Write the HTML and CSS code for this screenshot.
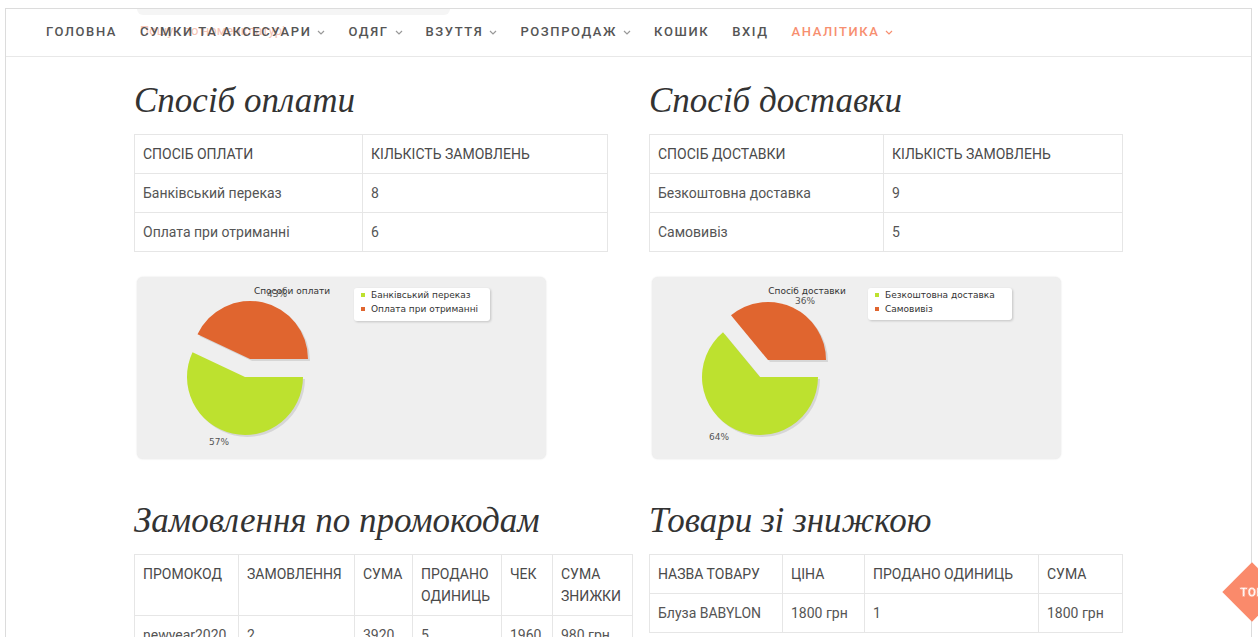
FILE: index.html
```html
<!DOCTYPE html>
<html lang="uk">
<head>
<meta charset="utf-8">
<title>Аналітика</title>
<link rel="stylesheet" href="styles.css">
</head>
<body>
<div class="page">
  <header class="nav">
    <div class="search-ghost"><span>Пошук по номенклатурі</span></div>
    <ul class="menu">
      <li>Головна</li>
      <li>Сумки та аксесуари <svg class="chev" viewBox="0 0 8 5" width="8" height="5"><polyline points="1,1 4,4 7,1"/></svg></li>
      <li>Одяг <svg class="chev" viewBox="0 0 8 5" width="8" height="5"><polyline points="1,1 4,4 7,1"/></svg></li>
      <li>Взуття <svg class="chev" viewBox="0 0 8 5" width="8" height="5"><polyline points="1,1 4,4 7,1"/></svg></li>
      <li>Розпродаж <svg class="chev" viewBox="0 0 8 5" width="8" height="5"><polyline points="1,1 4,4 7,1"/></svg></li>
      <li>Кошик</li>
      <li>Вхід</li>
      <li class="active">Аналітика <svg class="chev" viewBox="0 0 8 5" width="8" height="5"><polyline points="1,1 4,4 7,1"/></svg></li>
    </ul>
  </header>

  <main class="content">
    <section class="grid">
      <div class="col">
        <h2>Спосіб оплати</h2>
        <table class="tbl">
          <colgroup><col class="w228"><col></colgroup>
          <tr><th>Спосіб оплати</th><th>Кількість замовлень</th></tr>
          <tr><td>Банківський переказ</td><td>8</td></tr>
          <tr><td>Оплата при отриманні</td><td>6</td></tr>
        </table>
        <div class="chart">
          <svg width="409" height="182" viewBox="0 0 409 182">
            <g class="shade">
              <path d="M113,82 L171,82 A58,58 0 0 0 60.5,57.3 Z" transform="translate(2,2)"/>
              <path d="M108,100 L55.5,75.3 A58,58 0 1 0 166,100 Z" transform="translate(2,2)"/>
            </g>
            <path class="slice-orange" d="M113,82 L171,82 A58,58 0 0 0 60.5,57.3 Z"/>
            <path class="slice-green" d="M108,100 L55.5,75.3 A58,58 0 1 0 166,100 Z"/>
            <text class="pct" x="140" y="20" text-anchor="middle">43%</text>
            <text class="ttl" x="155" y="17" text-anchor="middle">Способи оплати</text>
            <text class="pct" x="82" y="168" text-anchor="middle">57%</text>
            <rect class="legend" x="217" y="11" width="136" height="33" rx="3"/>
            <rect class="sq-green" x="224" y="16" width="4" height="4"/>
            <text class="lg" x="234" y="21">Банківський переказ</text>
            <rect class="sq-orange" x="224" y="30" width="4" height="4"/>
            <text class="lg" x="234" y="35">Оплата при отриманні</text>
          </svg>
        </div>
      </div>
      <div class="col">
        <h2>Спосіб доставки</h2>
        <table class="tbl">
          <colgroup><col class="w234"><col></colgroup>
          <tr><th>Спосіб доставки</th><th>Кількість замовлень</th></tr>
          <tr><td>Безкоштовна доставка</td><td>9</td></tr>
          <tr><td>Самовивіз</td><td>5</td></tr>
        </table>
        <div class="chart">
          <svg width="409" height="182" viewBox="0 0 409 182">
            <g class="shade">
              <path d="M116,83 L174,83 A58,58 0 0 0 79,38.3 Z" transform="translate(2,2)"/>
              <path d="M108,100 L71,55.3 A58,58 0 1 0 166,100 Z" transform="translate(2,2)"/>
            </g>
            <path class="slice-orange" d="M116,83 L174,83 A58,58 0 0 0 79,38.3 Z"/>
            <path class="slice-green" d="M108,100 L71,55.3 A58,58 0 1 0 166,100 Z"/>
            <text class="ttl" x="155" y="17" text-anchor="middle">Спосіб доставки</text>
            <text class="pct" x="153" y="27" text-anchor="middle">36%</text>
            <text class="pct" x="67" y="163" text-anchor="middle">64%</text>
            <rect class="legend" x="216" y="11" width="144" height="32" rx="3"/>
            <rect class="sq-green" x="223" y="16" width="4" height="4"/>
            <text class="lg" x="233" y="21">Безкоштовна доставка</text>
            <rect class="sq-orange" x="223" y="30" width="4" height="4"/>
            <text class="lg" x="233" y="35">Самовивіз</text>
          </svg>
        </div>
      </div>
    </section>

    <section class="grid lower">
      <div class="col">
        <h2>Замовлення по промокодам</h2>
        <table class="tbl wide">
          <colgroup><col class="w104"><col class="w116"><col class="w58"><col class="w89"><col class="w51"><col class="w80"></colgroup>
          <tr><th>Промокод</th><th>Замовлення</th><th>Сума</th><th>Продано одиниць</th><th>Чек</th><th>Сума знижки</th></tr>
          <tr><td>newyear2020</td><td>2</td><td>3920</td><td>5</td><td>1960</td><td>980 грн</td></tr>
        </table>
      </div>
      <div class="col">
        <h2>Товари зі знижкою</h2>
        <table class="tbl">
          <colgroup><col class="w133"><col class="w82"><col class="w174"><col></colgroup>
          <tr><th>Назва товару</th><th>Ціна</th><th>Продано одиниць</th><th>Сума</th></tr>
          <tr><td>Блуза BABYLON</td><td>1800 грн</td><td>1</td><td>1800 грн</td></tr>
        </table>
      </div>
    </section>
  </main>
</div>
<a class="to-top" href="#"><span>TOP</span></a>
</body>
</html>
```

FILE: styles.css
```css
html, body {
  margin: 0;
  padding: 0;
  background: #fff;
}
html {
  overflow: hidden;
}
body {
  font-family: Roboto, "Liberation Sans", sans-serif;
  color: #555;
}

/* framed page */
.page {
  margin: 8px 6px 0 5px;
  border: 1px solid #dcdcdc;
  border-bottom: 0;
  min-height: 700px;
}

/* top navigation */
.nav {
  position: relative;
  height: 47px;
  border-bottom: 1px solid #e8e8e8;
  display: flex;
  align-items: center;
  padding-left: 40px;
}
.menu {
  position: relative;
  display: flex;
  align-items: center;
  gap: 23px;
  margin: 0 0 2px;
  padding: 0;
  list-style: none;
}
.menu li {
  display: flex;
  align-items: center;
  gap: 6px;
  font-size: 13px;
  font-weight: 500;
  letter-spacing: 1.6px;
  text-transform: uppercase;
  color: #555;
  white-space: nowrap;
}
.menu li.active {
  color: #f78f70;
}
.chev {
  fill: none;
  stroke: #999;
  stroke-width: 1.2;
  margin-top: 1px;
}
.menu li.active .chev {
  stroke: #f78f70;
}

/* faded search dropdown behind the menu */
.search-ghost {
  position: absolute;
  left: 131px;
  top: 0;
  width: 313px;
  height: 6px;
  background: #f5f5f5;
  border-radius: 0 0 8px 8px;
}
.search-ghost span {
  position: absolute;
  left: 3px;
  top: 14px;
  font-size: 13px;
  color: #f6c3b3;
  white-space: nowrap;
}

/* main content */
.content {
  width: 989px;
  margin: 0 auto;
  padding-top: 23px;
}
.grid {
  display: grid;
  grid-template-columns: 474px 474px;
  column-gap: 41px;
}
.grid.lower {
  margin-top: 41px;
}
h2 {
  margin: 0 0 12px;
  font-family: "Liberation Serif", "DejaVu Serif", serif;
  font-style: italic;
  font-weight: 400;
  font-size: 35px;
  line-height: 42px;
  color: #333;
}

/* tables */
.tbl {
  width: 474px;
  border-collapse: collapse;
  table-layout: fixed;
  font-size: 14px;
  line-height: 22px;
}
.tbl.wide {
  width: 498px;
}
.tbl th, .tbl td {
  border: 1px solid #e6e6e6;
  padding: 8px 8px;
  text-align: left;
  vertical-align: top;
  font-weight: 400;
}
.tbl th {
  text-transform: uppercase;
  color: #4a4a4a;
}
.tbl td {
  color: #555;
}
.w228 { width: 228px; }
.w234 { width: 234px; }
.w104 { width: 104px; }
.w116 { width: 116px; }
.w58 { width: 58px; }
.w89 { width: 89px; }
.w51 { width: 51px; }
.w80 { width: 80px; }
.w133 { width: 133px; }
.w82 { width: 82px; }
.w174 { width: 174px; }

/* pie charts */
.chart {
  width: 409px;
  height: 182px;
  margin: 25px 0 0 3px;
  background: #efefef;
  border-radius: 6px;
  box-shadow: 0 0 2px rgba(0, 0, 0, 0.12);
}
.chart svg {
  display: block;
}
.shade path {
  fill: rgba(0, 0, 0, 0.1);
}
.slice-green, .sq-green {
  fill: #bde12f;
}
.slice-orange, .sq-orange {
  fill: #e0652f;
}
.chart text {
  font-family: "DejaVu Sans", Verdana, sans-serif;
  font-size: 9px;
}
.ttl {
  fill: #333;
}
.pct {
  fill: #555;
}
.lg {
  fill: #333;
}
.legend {
  fill: #fff;
  filter: drop-shadow(1px 1px 1px rgba(0, 0, 0, 0.18));
}

/* back-to-top diamond */
.to-top {
  position: fixed;
  top: 571px;
  right: -15px;
  width: 42px;
  height: 42px;
  background: #fa8a6b;
  transform: rotate(45deg);
  text-decoration: none;
  display: flex;
  align-items: center;
  justify-content: center;
}
.to-top span {
  transform: rotate(-45deg);
  color: #fff;
  font-size: 12px;
  font-weight: 700;
  letter-spacing: 0.5px;
}
```
